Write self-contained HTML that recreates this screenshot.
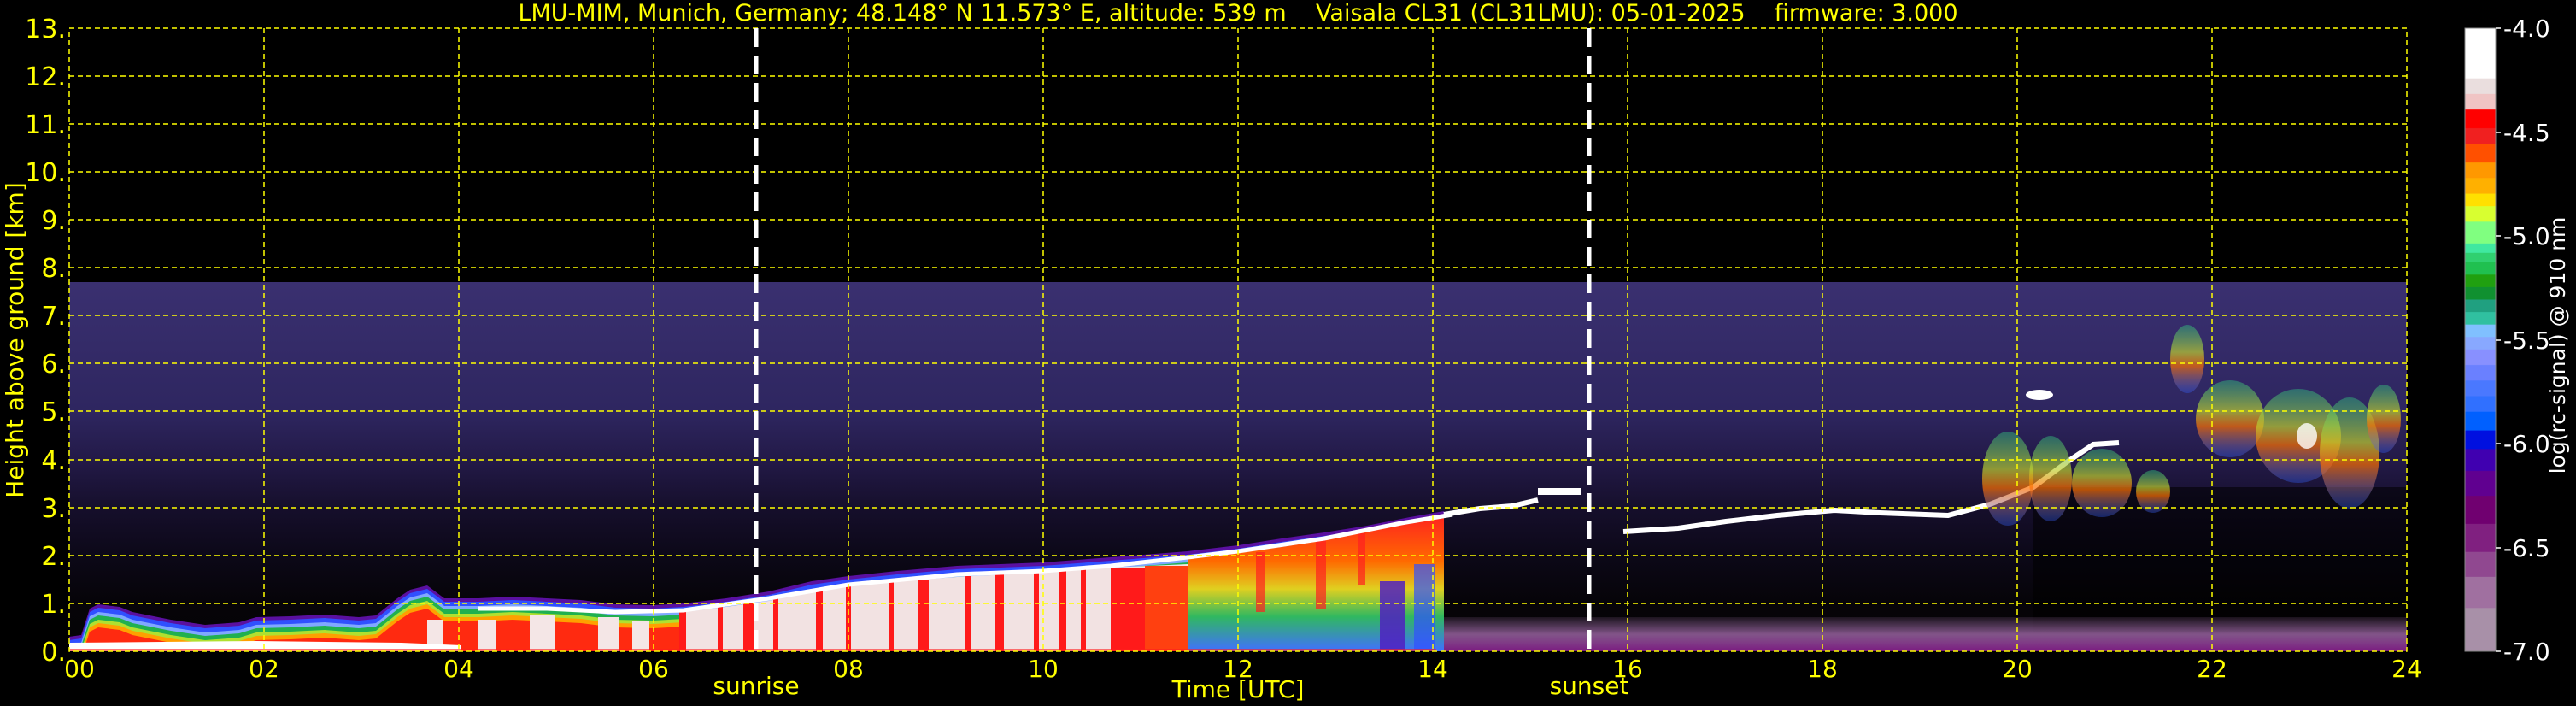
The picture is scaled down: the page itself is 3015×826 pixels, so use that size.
<!DOCTYPE html>
<html><head><meta charset="utf-8"><style>
html,body{margin:0;padding:0;background:#000;width:3015px;height:826px;overflow:hidden}
svg{display:block}
text{font-family:"DejaVu Sans","Liberation Sans",sans-serif;fill:#ffff00;white-space:pre}
</style></head><body>
<svg width="3015" height="826" viewBox="0 0 3015 826" xmlns="http://www.w3.org/2000/svg">
<defs>
<linearGradient id="bg" gradientUnits="userSpaceOnUse" x1="0" y1="330" x2="0" y2="762">
<stop offset="0" stop-color="#3a3070"/>
<stop offset="0.35" stop-color="#2e2660"/>
<stop offset="0.48" stop-color="#231a48"/>
<stop offset="0.61" stop-color="#160f2c"/>
<stop offset="0.74" stop-color="#0c0818"/>
<stop offset="0.87" stop-color="#060408"/>
<stop offset="1" stop-color="#040306"/>
</linearGradient>
<linearGradient id="haze" x1="0" y1="0" x2="0" y2="1">
<stop offset="0" stop-color="#a070a8" stop-opacity="0.15"/>
<stop offset="0.5" stop-color="#a068a8" stop-opacity="0.8"/>
<stop offset="1" stop-color="#7a1a80"/>
</linearGradient>
<linearGradient id="mixC" gradientUnits="userSpaceOnUse" x1="0" y1="600" x2="0" y2="762">
<stop offset="0" stop-color="#ff2020"/>
<stop offset="0.35" stop-color="#ff6a00"/>
<stop offset="0.55" stop-color="#e0d020"/>
<stop offset="0.75" stop-color="#30b860"/>
<stop offset="1" stop-color="#4070ff"/>
</linearGradient>
<linearGradient id="cl" x1="0" y1="0" x2="0" y2="1">
<stop offset="0" stop-color="#30c080" stop-opacity="0.45"/>
<stop offset="0.4" stop-color="#c0d030" stop-opacity="0.7"/>
<stop offset="0.6" stop-color="#ff7000" stop-opacity="0.7"/>
<stop offset="1" stop-color="#3060ff" stop-opacity="0.35"/>
</linearGradient>
<linearGradient id="cb" x1="0" y1="0" x2="0" y2="1">
<stop offset="0" stop-color="#fff"/><stop offset="0.08" stop-color="#fff"/>
<stop offset="0.081" stop-color="#eadede"/><stop offset="0.105" stop-color="#eadede"/>
<stop offset="0.106" stop-color="#f0c4c4"/><stop offset="0.13" stop-color="#f0c4c4"/>
<stop offset="0.131" stop-color="#ff0000"/><stop offset="0.16" stop-color="#ff0000"/>
<stop offset="0.161" stop-color="#f02020"/><stop offset="0.185" stop-color="#f02020"/>
<stop offset="0.186" stop-color="#ff5000"/><stop offset="0.215" stop-color="#ff5000"/>
<stop offset="0.216" stop-color="#ff9800"/><stop offset="0.24" stop-color="#ff9800"/>
<stop offset="0.241" stop-color="#ffb000"/><stop offset="0.265" stop-color="#ffb000"/>
<stop offset="0.266" stop-color="#ffe000"/><stop offset="0.285" stop-color="#ffe000"/>
<stop offset="0.286" stop-color="#d8ff30"/><stop offset="0.31" stop-color="#d8ff30"/>
<stop offset="0.311" stop-color="#80ff80"/><stop offset="0.345" stop-color="#80ff80"/>
<stop offset="0.346" stop-color="#40e8a0"/><stop offset="0.36" stop-color="#40e8a0"/>
<stop offset="0.361" stop-color="#30d070"/><stop offset="0.375" stop-color="#30d070"/>
<stop offset="0.376" stop-color="#20c050"/><stop offset="0.395" stop-color="#20c050"/>
<stop offset="0.396" stop-color="#20a010"/><stop offset="0.415" stop-color="#20a010"/>
<stop offset="0.416" stop-color="#109030"/><stop offset="0.435" stop-color="#109030"/>
<stop offset="0.436" stop-color="#20a080"/><stop offset="0.455" stop-color="#20a080"/>
<stop offset="0.456" stop-color="#30c0a0"/><stop offset="0.475" stop-color="#30c0a0"/>
<stop offset="0.476" stop-color="#80c0ff"/><stop offset="0.495" stop-color="#80c0ff"/>
<stop offset="0.496" stop-color="#88a8ff"/><stop offset="0.515" stop-color="#88a8ff"/>
<stop offset="0.516" stop-color="#8890ff"/><stop offset="0.54" stop-color="#8890ff"/>
<stop offset="0.541" stop-color="#6a80ff"/><stop offset="0.565" stop-color="#6a80ff"/>
<stop offset="0.566" stop-color="#4a78ff"/><stop offset="0.59" stop-color="#4a78ff"/>
<stop offset="0.591" stop-color="#3070ff"/><stop offset="0.615" stop-color="#3070ff"/>
<stop offset="0.616" stop-color="#0060ff"/><stop offset="0.645" stop-color="#0060ff"/>
<stop offset="0.646" stop-color="#0010e0"/><stop offset="0.675" stop-color="#0010e0"/>
<stop offset="0.676" stop-color="#4000b0"/><stop offset="0.71" stop-color="#4000b0"/>
<stop offset="0.711" stop-color="#600090"/><stop offset="0.75" stop-color="#600090"/>
<stop offset="0.751" stop-color="#700070"/><stop offset="0.795" stop-color="#700070"/>
<stop offset="0.796" stop-color="#802080"/><stop offset="0.84" stop-color="#802080"/>
<stop offset="0.841" stop-color="#904890"/><stop offset="0.88" stop-color="#904890"/>
<stop offset="0.881" stop-color="#a070a0"/><stop offset="0.93" stop-color="#a070a0"/>
<stop offset="0.931" stop-color="#a890a8"/><stop offset="1" stop-color="#a890a8"/>
</linearGradient>
<path id="pa" d="M81 745 L95 743 L105 712 L115 707 L140 710 L155 716 L175 720 L200 725 L240 731 L280 728 L300 722 L340 721 L380 719 L420 722 L440 720 L465 700 L480 690 L500 685 L520 700 L560 700 L600 698 L640 700 L680 702 L720 707 L765 708 L800 706 L850 700 L900 692 L950 680 L993 674 L1050 668 L1120 662 L1221 658 L1300 652 L1390 645 L1449 638 L1500 630 L1550 623 L1600 615 L1650 605 L1690 598 L1690 770 L81 770 Z"/>
<clipPath id="plot"><rect x="81" y="33" width="2736" height="729"/></clipPath>
</defs>

<rect x="81" y="330" width="2736" height="432" fill="url(#bg)"/>
<rect x="2380" y="570" width="437" height="170" fill="#000" opacity="0.55"/>
<rect x="1680" y="722" width="1137" height="40" fill="url(#haze)"/>

<g clip-path="url(#plot)">
<use href="#pa" fill="#5a10a0"/>
<use href="#pa" fill="#3050ff" transform="translate(0,4)"/>
<use href="#pa" fill="#80a8ff" transform="translate(0,9)"/>
<use href="#pa" fill="#20b050" transform="translate(0,13)"/>
<use href="#pa" fill="#b0e030" transform="translate(0,18)"/>
<use href="#pa" fill="#ffa000" transform="translate(0,22)"/>
<use href="#pa" fill="#ff2a10" transform="translate(0,27)"/>
<path d="M800 716 L850 710 L900 703 L950 692 L993 686 L1050 680 L1120 675 L1221 670 L1300 664 L1390 660 L1390 762 L800 762 Z" fill="#f2e2e2"/>
<g fill="#f4e6e6">
<rect x="500" y="725" width="18" height="37"/><rect x="560" y="725" width="20" height="37"/><rect x="620" y="720" width="30" height="42"/><rect x="700" y="722" width="25" height="40"/><rect x="740" y="726" width="20" height="36"/>
</g>
<g fill="#ff1a1a">
<rect x="795" y="716" width="8" height="46"/>
<rect x="840" y="708" width="6" height="54"/><rect x="870" y="706" width="12" height="56"/>
<rect x="905" y="700" width="6" height="62"/><rect x="955" y="692" width="8" height="70"/>
<rect x="990" y="686" width="6" height="76"/><rect x="1040" y="680" width="6" height="82"/>
<rect x="1075" y="678" width="12" height="84"/><rect x="1130" y="674" width="6" height="88"/>
<rect x="1165" y="672" width="10" height="90"/><rect x="1210" y="670" width="6" height="92"/>
<rect x="1240" y="668" width="8" height="94"/><rect x="1265" y="666" width="6" height="96"/>
<rect x="1300" y="664" width="40" height="98"/><rect x="1340" y="662" width="50" height="100" fill="#ff4010"/>
</g>
<path d="M1390 652 L1449 646 L1500 640 L1550 632 L1600 622 L1650 612 L1690 606 L1690 762 L1390 762 Z" fill="url(#mixC)"/>
<g fill="#ff2020" opacity="0.7"><rect x="1470" y="646" width="10" height="70"/><rect x="1540" y="632" width="12" height="80"/><rect x="1590" y="624" width="8" height="60"/></g>
<rect x="1615" y="680" width="30" height="82" fill="#5020c0" opacity="0.85"/>
<rect x="1655" y="660" width="25" height="102" fill="#3050ff" opacity="0.7"/>
<path d="M81 752 L300 750 L470 752 L540 755 L540 762 L81 762 Z" fill="#ffffff"/>
<rect x="81" y="759" width="1600" height="3" fill="#ff2020" opacity="0.6"/>
<path d="M560 712 L640 712 L720 716 L800 714 L900 700 L993 684 L1120 672 L1221 668 L1300 662 L1390 652 L1449 645 L1550 630 L1640 612 L1700 602" stroke="#fff" stroke-width="5" fill="none"/>
</g>

<path d="M1690 602 L1732 595 L1770 592 L1800 585" stroke="#fff" stroke-width="6" fill="none"/>
<path d="M1800 575 L1850 575" stroke="#fff" stroke-width="8" fill="none"/>
<path d="M1900 622 L1964 618 L2020 610 L2080 603 L2147 597 L2200 600 L2280 603 L2329 590 L2380 570 L2420 540 L2450 520 L2480 518" stroke="#fff" stroke-width="6" fill="none"/>
<ellipse cx="2387" cy="462" rx="16" ry="6" fill="#fff"/>
<g>
<ellipse cx="2350" cy="560" rx="30" ry="55" fill="url(#cl)"/>
<ellipse cx="2400" cy="560" rx="25" ry="50" fill="url(#cl)"/>
<ellipse cx="2460" cy="565" rx="35" ry="40" fill="url(#cl)"/>
<ellipse cx="2520" cy="575" rx="20" ry="25" fill="url(#cl)"/>
<ellipse cx="2560" cy="420" rx="20" ry="40" fill="url(#cl)"/>
<ellipse cx="2610" cy="490" rx="40" ry="45" fill="url(#cl)"/>
<ellipse cx="2690" cy="510" rx="50" ry="55" fill="url(#cl)"/>
<ellipse cx="2750" cy="530" rx="35" ry="65" fill="url(#cl)"/>
<ellipse cx="2790" cy="490" rx="20" ry="40" fill="url(#cl)"/>
<ellipse cx="2700" cy="510" rx="12" ry="15" fill="#fff" opacity="0.8"/>
</g>

<g stroke="#ffff00" stroke-width="1.5" stroke-dasharray="6,4" fill="none">
<path d="M81 706H2817M81 650H2817M81 594H2817M81 538H2817M81 481H2817M81 425H2817M81 369H2817M81 313H2817M81 257H2817M81 201H2817M81 145H2817M81 89H2817"/>
<path d="M309 33V762M537 33V762M765 33V762M993 33V762M1221 33V762M1449 33V762M1677 33V762M1905 33V762M2133 33V762M2361 33V762M2589 33V762"/>
</g>
<rect x="81" y="33" width="2736" height="729" fill="none" stroke="#ffff00" stroke-width="1.5" stroke-dasharray="6,4"/>
<path d="M885 33V762M1860 33V762" stroke="#fff" stroke-width="5" stroke-dasharray="22,10"/>

<text x="1449" y="24" font-size="27" text-anchor="middle">LMU-MIM, Munich, Germany; 48.148° N 11.573° E, altitude: 539 m    Vaisala CL31 (CL31LMU): 05-01-2025    firmware: 3.000</text>

<g font-size="30" text-anchor="end">
<text x="77" y="773">0.</text><text x="77" y="717">1.</text><text x="77" y="661">2.</text><text x="77" y="605">3.</text><text x="77" y="549">4.</text><text x="77" y="492">5.</text><text x="77" y="436">6.</text><text x="77" y="380">7.</text><text x="77" y="324">8.</text><text x="77" y="268">9.</text><text x="77" y="212">10.</text><text x="77" y="156">11.</text><text x="77" y="100">12.</text><text x="77" y="44">13.</text>
</g>
<text transform="translate(27 398) rotate(-90)" font-size="28" text-anchor="middle">Height above ground [km]</text>

<g font-size="28" text-anchor="middle">
<text x="93" y="792">00</text><text x="309" y="792">02</text><text x="537" y="792">04</text><text x="765" y="792">06</text><text x="993" y="792">08</text><text x="1221" y="792">10</text><text x="1449" y="792">12</text><text x="1677" y="792">14</text><text x="1905" y="792">16</text><text x="2133" y="792">18</text><text x="2361" y="792">20</text><text x="2589" y="792">22</text><text x="2817" y="792">24</text>
<text x="885" y="812">sunrise</text><text x="1860" y="812">sunset</text>
<text x="1449" y="816">Time [UTC]</text>
</g>

<rect x="2885" y="33" width="36" height="729" fill="url(#cb)" stroke="#888" stroke-width="1"/>
<path d="M2921 33h6M2921 155h6M2921 276h6M2921 398h6M2921 519h6M2921 641h6M2921 762h6" stroke="#fff" stroke-width="1.5"/>
<g font-size="28">
<text x="2930" y="43" style="fill:#fff">-4.0</text>
<text x="2930" y="165" style="fill:#fff">-4.5</text>
<text x="2930" y="286" style="fill:#fff">-5.0</text>
<text x="2930" y="408" style="fill:#fff">-5.5</text>
<text x="2930" y="529" style="fill:#fff">-6.0</text>
<text x="2930" y="651" style="fill:#fff">-6.5</text>
<text x="2930" y="772" style="fill:#fff">-7.0</text>
</g>
<text transform="translate(3002 404) rotate(-90)" font-size="25" text-anchor="middle" style="fill:#fff">log(rc-signal) @ 910 nm</text>
</svg>
</body></html>
